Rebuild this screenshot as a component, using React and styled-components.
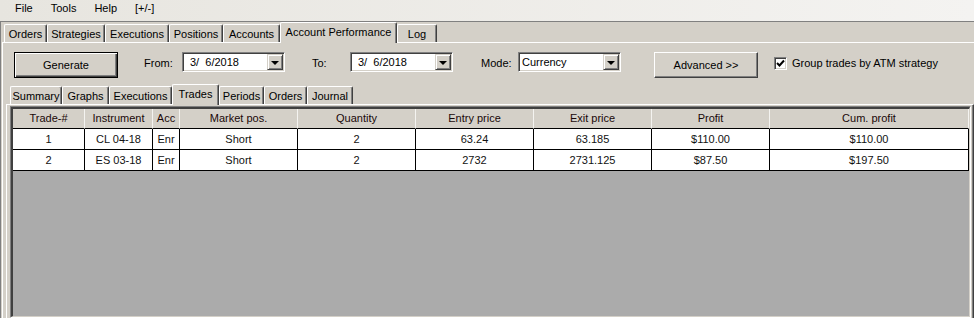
import React from 'react'
import styled, { createGlobalStyle } from 'styled-components'

const GlobalStyle = createGlobalStyle`
  html, body {
    margin: 0;
    padding: 0;
    background: #d4d0c8;
  }
  body {
    font-family: "Liberation Sans", Arial, sans-serif;
    font-size: 11px;
    color: #000;
  }
  #root {
    width: 974px;
    height: 318px;
    overflow: hidden;
  }
`

const Window = styled.div`
  width: 974px;
  height: 318px;
  overflow: hidden;
  display: flex;
  flex-direction: column;
  background: #d4d0c8;
`

const MenuBar = styled.div`
  display: flex;
  flex-shrink: 0;
  height: 21px;
  padding-left: 6px;
  background: linear-gradient(to right, #e7e5df, #f4f3f1);
`

const MenuItem = styled.div`
  padding: 0 9px;
  line-height: 17px;
`

const Client = styled.div`
  flex: 1;
  min-height: 0;
  width: 978px;
  display: flex;
  flex-direction: column;
  border-top: 1px solid #808080;
  border-left: 1px solid #808080;
  padding-left: 1px;
`

const TabControl = styled.div`
  flex: 1;
  min-height: 0;
  width: ${p => p.$width}px;
  margin-top: ${p => p.$mt || 0}px;
  display: flex;
  flex-direction: column;
`

const TabStrip = styled.div`
  position: relative;
  z-index: 1;
  flex-shrink: 0;
  display: flex;
  align-items: flex-end;
  height: 20px;
  padding-left: ${p => p.$indent}px;
`

const Tab = styled.div`
  box-sizing: border-box;
  width: ${p => p.$w}px;
  height: ${p => (p.$active ? 21 : 18)}px;
  margin-bottom: ${p => (p.$active ? -1 : 0)}px;
  padding-top: 3px;
  line-height: 13px;
  text-align: center;
  white-space: nowrap;
  background: #d4d0c8;
  border-top: 1px solid #fff;
  border-left: 1px solid #fff;
  border-right: 1px solid #404040;
  border-radius: 2px 2px 0 0;
  box-shadow: inset -1px 0 #808080;
`

const TabPanel = styled.div`
  flex: 1;
  min-height: 0;
  display: flex;
  flex-direction: column;
  border-top: 1px solid #fff;
  border-left: 1px solid #fff;
  border-right: 1px solid #404040;
  box-shadow: inset -1px 0 #808080;
  padding: ${p => p.$pad};
`

const Toolbar = styled.div`
  flex-shrink: 0;
  display: flex;
  align-items: flex-start;
  height: 26px;
  margin-top: 9px;
`

const Button = styled.button`
  box-sizing: border-box;
  width: 104px;
  height: 26px;
  margin: 0 0 0 ${p => p.$ml}px;
  padding: 0;
  font: inherit;
  color: #000;
  background: #d4d0c8;
  border: 1px solid;
  border-color: ${p => (p.$default ? '#000' : '#fff #404040 #404040 #fff')};
  box-shadow: ${p =>
    p.$default
      ? 'inset 1px 1px #fff, inset -1px -1px #404040, inset -2px -2px #808080'
      : 'inset -1px -1px #808080'};
`

const Label = styled.span`
  box-sizing: border-box;
  width: ${p => (p.$w ? `${p.$w}px` : 'auto')};
  margin: 5px 0 0 ${p => p.$ml}px;
  line-height: 13px;
  white-space: nowrap;
`

const Combo = styled.div`
  box-sizing: border-box;
  width: 103px;
  height: 20px;
  display: flex;
  align-items: center;
  justify-content: space-between;
  padding-left: ${p => p.$textPad}px;
  background: #fff;
  border: 1px solid;
  border-color: #808080 #fff #fff #808080;
  box-shadow: inset 1px 1px #404040, inset -1px -1px #d4d0c8;
`

const ComboText = styled.span`
  white-space: pre;
  line-height: 13px;
`

const DropButton = styled.div`
  box-sizing: border-box;
  width: 16px;
  height: 16px;
  margin-right: 1px;
  display: flex;
  align-items: center;
  justify-content: center;
  background: #d4d0c8;
  border: 1px solid;
  border-color: #d4d0c8 #404040 #404040 #d4d0c8;
  box-shadow: inset 1px 1px #fff, inset -1px -1px #808080;
`

const Arrow = styled.span`
  width: 0;
  height: 0;
  border-left: 4px solid transparent;
  border-right: 4px solid transparent;
  border-top: 4px solid #000;
  margin-top: 1px;
`

const CheckBox = styled.div`
  box-sizing: border-box;
  width: 13px;
  height: 13px;
  margin: 5px 0 0 ${p => p.$ml}px;
  background: #fff;
  border: 1px solid;
  border-color: #808080 #fff #fff #808080;
  box-shadow: inset 1px 1px #404040, inset -1px -1px #d4d0c8;
  display: flex;
  align-items: center;
  justify-content: center;
`

const GridFrame = styled.div`
  box-sizing: border-box;
  flex: 1;
  width: 961px;
  display: flex;
  border: 1px solid;
  border-color: #808080 #fff #fff #808080;
`

const GridBody = styled.div`
  flex: 1;
  background: #ababab;
  border-style: solid;
  border-width: 2px 1px 1px 2px;
  border-color: #404040 #d4d0c8 #d4d0c8 #404040;
`

const COLS = '72px 68px 27px 118px 118px 118px 118px 118px 199px'

const Row = styled.div`
  display: grid;
  grid-template-columns: ${COLS};
`

const HeadCell = styled.div`
  box-sizing: border-box;
  height: 20px;
  line-height: 19px;
  text-align: center;
  white-space: nowrap;
  overflow: hidden;
  color: #1a0808;
  background: #d4d0c8;
  border-right: 1px solid #f4f3f0;
  border-bottom: 1px solid #000;
`

const Cell = styled.div`
  box-sizing: border-box;
  height: 21px;
  line-height: 20px;
  text-align: center;
  white-space: nowrap;
  overflow: hidden;
  color: #111;
  background: #fff;
  border-right: 1px solid #000;
  border-bottom: 1px solid #000;
`

const mainTabs = [
  ['Orders', 43],
  ['Strategies', 58],
  ['Executions', 64],
  ['Positions', 54],
  ['Accounts', 57],
  ['Account Performance', 117, true],
  ['Log', 40],
]

const subTabs = [
  ['Summary', 52],
  ['Graphs', 47],
  ['Executions', 63],
  ['Trades', 47, true],
  ['Periods', 45],
  ['Orders', 43],
  ['Journal', 46],
]

const headers = [
  'Trade-#',
  'Instrument',
  'Acc',
  'Market pos.',
  'Quantity',
  'Entry price',
  'Exit price',
  'Profit',
  'Cum. profit',
]

const trades = [
  ['1', 'CL 04-18', 'Enr', 'Short', '2', '63.24', '63.185', '$110.00', '$110.00'],
  ['2', 'ES 03-18', 'Enr', 'Short', '2', '2732', '2731.125', '$87.50', '$197.50'],
]

const DropDown = ({ text, textPad }) => (
  <Combo $textPad={textPad}>
    <ComboText>{text}</ComboText>
    <DropButton>
      <Arrow />
    </DropButton>
  </Combo>
)

export default function App() {
  return (
    <>
      <GlobalStyle />
      <Window>
        <MenuBar>
          <MenuItem>File</MenuItem>
          <MenuItem>Tools</MenuItem>
          <MenuItem>Help</MenuItem>
          <MenuItem>[+/-]</MenuItem>
        </MenuBar>
        <Client>
          <TabControl $width={976}>
            <TabStrip $indent={2}>
              {mainTabs.map(([name, w, active]) => (
                <Tab key={name} $w={w} $active={active}>{name}</Tab>
              ))}
            </TabStrip>
            <TabPanel $pad="0 3px 0 3px">
              <Toolbar>
                <Button $ml={8} $default>Generate</Button>
                <Label $ml={26} $w={38}>From:</Label>
                <DropDown text="3/  6/2018" textPad={7} />
                <Label $ml={27} $w={38}>To:</Label>
                <DropDown text="3/  6/2018" textPad={7} />
                <Label $ml={28} $w={37}>Mode:</Label>
                <DropDown text="Currency" textPad={3} />
                <Button $ml={33}>Advanced &gt;&gt;</Button>
                <CheckBox $ml={16}>
                  <svg width="9" height="9" viewBox="0 0 9 9">
                    <polyline points="1,4 3.5,6.5 8,1.5" fill="none" stroke="#000" strokeWidth="2" />
                  </svg>
                </CheckBox>
                <Label $ml={5}>Group trades by ATM strategy</Label>
              </Toolbar>
              <TabControl $width={968} $mt={6}>
                <TabStrip $indent={4}>
                  {subTabs.map(([name, w, active]) => (
                    <Tab key={name} $w={w} $active={active}>{name}</Tab>
                  ))}
                </TabStrip>
                <TabPanel $pad="1px 2px 0 3px">
                  <GridFrame>
                    <GridBody>
                      <Row>
                        {headers.map(h => (
                          <HeadCell key={h}>{h}</HeadCell>
                        ))}
                      </Row>
                      {trades.map(t => (
                        <Row key={t[0]}>
                          {t.map((v, i) => (
                            <Cell key={i}>{v}</Cell>
                          ))}
                        </Row>
                      ))}
                    </GridBody>
                  </GridFrame>
                </TabPanel>
              </TabControl>
            </TabPanel>
          </TabControl>
        </Client>
      </Window>
    </>
  )
}
